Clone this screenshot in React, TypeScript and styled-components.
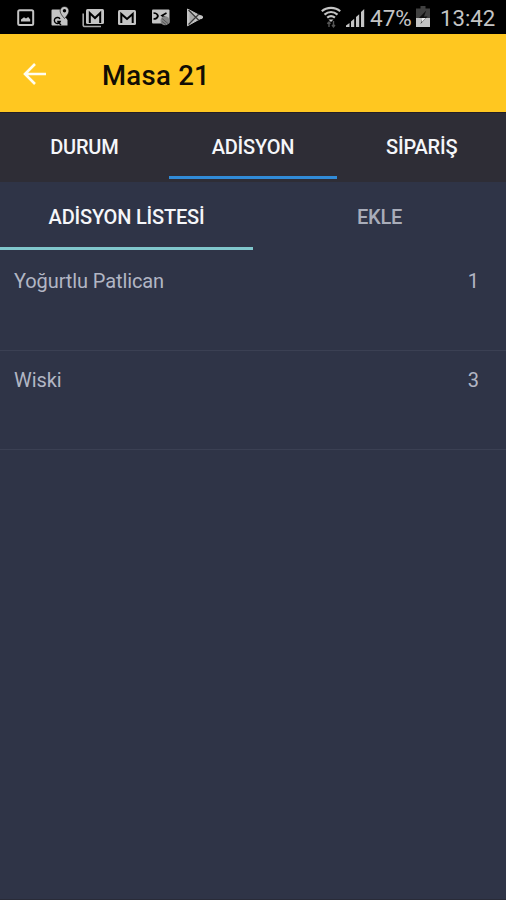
import React from 'react';
import styled, { createGlobalStyle } from 'styled-components';

const GlobalStyle = createGlobalStyle`
  * { box-sizing: border-box; }
  body { margin: 0; background: #2f3447; font-family: Roboto, "Noto Sans", sans-serif; }
`;

const Screen = styled.main`
  display: flex;
  flex-direction: column;
  height: 900px;
  background: #2f3447;
  border-bottom: 1px solid #292b38;
  overflow: hidden;
`;

const StatusBar = styled.div`
  display: flex;
  flex: none;
  height: 34px;
  background: #000;
  color: #c4c4c4;
`;

const StatusIcons = styled.svg`
  flex: none;
  display: block;
`;

const StatusText = styled.span<{ $width: number; $size: number }>`
  flex: none;
  width: ${(p) => p.$width}px;
  font-size: ${(p) => p.$size}px;
  line-height: 36px;
  white-space: nowrap;
`;

const Header = styled.header`
  display: flex;
  flex: none;
  align-items: center;
  height: 79px;
  padding-left: 22px;
  background: #ffc720;
  border-bottom: 1px solid #241f26;
`;

const BackButton = styled.button`
  display: flex;
  width: 80px;
  padding: 1px 0 0;
  border: 0;
  background: none;
`;

const Title = styled.h1`
  margin: 6px 0 0;
  font-size: 27.5px;
  font-weight: 500;
  letter-spacing: 0.3px;
  line-height: 32px;
  color: #120d04;
`;

const Tabs = styled.nav<{ $sub?: boolean }>`
  display: flex;
  flex: none;
  height: ${(p) => (p.$sub ? 68 : 69)}px;
  padding-bottom: ${(p) => (p.$sub ? 0 : 3)}px;
  background: ${(p) => (p.$sub ? '#2f3447' : '#2e2d36')};
`;

const Tab = styled.button<{ $line?: string; $muted?: boolean }>`
  flex: 1 1 0;
  padding: 4px 0 0;
  border: 0;
  border-bottom: 3px solid ${(p) => p.$line ?? 'transparent'};
  background: none;
  color: ${(p) => (p.$muted ? '#a9adba' : '#f5f6f9')};
  font: 500 20px Roboto, "Noto Sans", sans-serif;
  letter-spacing: -0.2px;
`;

const List = styled.ul`
  margin: 0;
  padding: 0;
  list-style: none;
`;

const Row = styled.li`
  display: flex;
  justify-content: space-between;
  height: 99px;
  padding: 17px 27px 0 14px;
  border-bottom: 1px solid #3b4053;
  color: #b2b6c4;
  font-size: 20px;
  letter-spacing: -0.1px;
  line-height: 24px;

  &:first-child { height: 101px; padding-top: 19px; }
`;

const items = [
  { name: 'Yoğurtlu Patlican', count: 1 },
  { name: 'Wiski', count: 3 },
];

const NotificationIcons = () => (
  <StatusIcons width="320" height="34" fill="#c4c4c4">
    <rect x="18.2" y="10.2" width="15" height="14.8" rx="1.5" fill="none" stroke="#c4c4c4" strokeWidth="2" />
    <path d="M21 21.5v-2l3-2.3 2 1.2 2.2-1.4 2 2.5v2z" />

    <path d="M52.5 9.5h9c0 4 2 6 4.5 8.500L67.500 20v5.500h-15a1 1 0 0 1-1-1v-14a1 1 0 0 1 1-1z" />
    <path d="M60 19a3 3 0 1 0 .2 2.500h-3M61 25l-3-3" fill="none" stroke="#000" strokeWidth="1.400" />
    <path d="M64.500 6.500a4.400 4.400 0 0 1 4.400 4.400c0 3-4.400 7.600-4.400 7.600s-4.400-4.600-4.400-7.600a4.400 4.400 0 0 1 4.400-4.400z" stroke="#000" strokeWidth=".6" />
    <circle cx="64.500" cy="10.800" r="1.700" fill="#000" />

    <path d="M83.200 13.500V25a1.500 1.500 0 0 0 1.500 1.500H101" fill="none" stroke="#a8a8a8" strokeWidth="1.600" />
    <rect x="86" y="9" width="18" height="15" rx="1.500" />
    <path d="M89.800 23v-10l5.200 5 5.200-5v10" fill="none" stroke="#000" strokeWidth="2" />

    <rect x="118" y="10" width="18" height="15" rx="1.500" />
    <path d="M121.300 23v-9l5.700 5 5.700-5v9" fill="none" stroke="#000" strokeWidth="2" />

    <rect x="152" y="9.500" width="17.500" height="14" rx="1" />
    <path d="M153.500 13c2 0 4 1 4.500 3-.5 2-2.500 3-4.500 3M166.500 13l-4.500 2.500 3 2" fill="none" stroke="#000" strokeWidth="1.700" />
    <circle cx="165" cy="20.800" r="4.500" fill="#858585" />
    <path d="M162 18.500l6 5M162 21.500l4 3" stroke="#555" />

    <path d="M187.500 9l15.500 8.200-15.500 8.600z" fill="#c4c4c4" stroke="#c4c4c4" strokeLinejoin="round" />
    <path d="M189.500 12.500l6.500 4.700-6.500 5z" fill="#a8a8a8" />
    <path d="M188.500 10l10.500 10.500M188.500 24.500l10.500-10.500" fill="none" stroke="#383838" strokeWidth="1.300" />
    <circle cx="200.800" cy="17.200" r="2" />
  </StatusIcons>
);

const SignalIcons = () => (
  <StatusIcons width="50" height="34" fill="#c4c4c4">
    <g fill="none" stroke="#c4c4c4" strokeWidth="2.200">
      <path d="M1.800 11.300c5-4.500 13.400-4.500 18.400 0" />
      <path d="M4.500 14.600c4-3.400 9-3.400 13 0" />
      <path d="M7.200 17.700c2.500-2 5.200-2 7.700 0" />
    </g>
    <path d="M8.500 19.500h5L11 22z" />
    <path d="M9 27v-5M7.300 23.800L9 22l1.500 1.800M13.500 21v5.500M12 25l1.500 1.800L15 25" fill="none" stroke="#555" strokeWidth="1.400" />
    <path d="M26 27v-1.500l3.500-2.500v4zM31 27v-5.500l3.200-2.800V27zM36 27V17l3.200-2.800V27zM41 27V12l3.200-3v18z" />
  </StatusIcons>
);

const BatteryIcon = () => (
  <StatusIcons width="28" height="34">
    <path d="M4 8.500h4.500V6h5v2.500H18V18H4z" fill="#404040" />
    <path d="M4 18h14v9H4z" fill="#c4c4c4" />
    <path d="M14.200 10.500L7 18h3.500L8.500 24l7-7.500H12z" fill="#111" />
    <path d="M10 18h4l-4.500 4.500z" fill="#eee" />
  </StatusIcons>
);

export default function App() {
  return (
    <Screen>
      <GlobalStyle />
      <StatusBar>
        <NotificationIcons />
        <SignalIcons />
        <StatusText $width={42} $size={22.5}>47%</StatusText>
        <BatteryIcon />
        <StatusText $width={60} $size={22.2}>13:42</StatusText>
      </StatusBar>
      <Header>
        <BackButton aria-label="Geri">
          <svg width="26" height="26" fill="none" stroke="#fffdf0" strokeWidth="2.600">
            <path d="M24 13H3M13 3L3 13l10 10" />
          </svg>
        </BackButton>
        <Title>Masa 21</Title>
      </Header>
      <Tabs>
        <Tab>DURUM</Tab>
        <Tab $line="#318bd8">ADİSYON</Tab>
        <Tab>SİPARİŞ</Tab>
      </Tabs>
      <Tabs $sub>
        <Tab $line="#80c6cc">ADİSYON LİSTESİ</Tab>
        <Tab $muted>EKLE</Tab>
      </Tabs>
      <List>
        {items.map((item) => (
          <Row key={item.name}>
            <span>{item.name}</span>
            <span>{item.count}</span>
          </Row>
        ))}
      </List>
    </Screen>
  );
}
